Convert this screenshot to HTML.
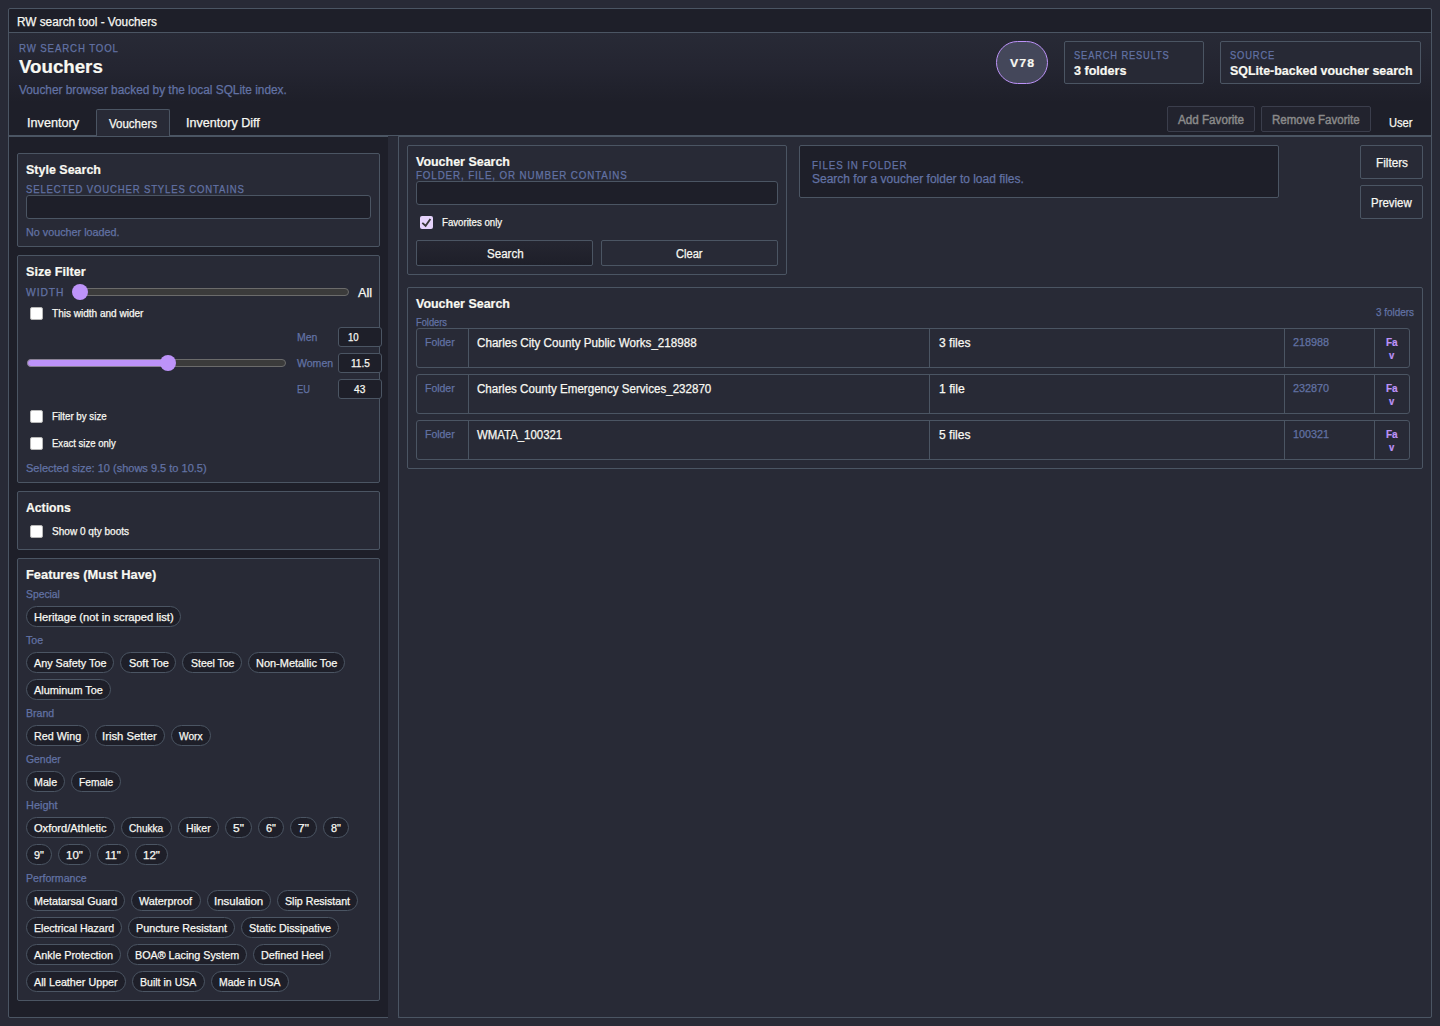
<!DOCTYPE html>
<html><head><meta charset="utf-8"><title>RW search tool - Vouchers</title>
<style>
html,body{margin:0;padding:0}
body{width:1440px;height:1026px;background:#282a36;position:relative;overflow:hidden;font-family:"Liberation Sans",sans-serif;}
.b{position:absolute;box-sizing:border-box}
.t{position:absolute;white-space:pre;line-height:1;transform-origin:0 0;}
.t i{display:inline-block;width:0;height:40px}
</style></head>
<body>
<div class="b" style="left:9px;top:9px;width:1422px;height:23px;background:#1e1f29;"></div>
<div class="b" style="left:9px;top:32px;width:1422px;height:1px;background:#4b5563;"></div>
<div class="b" style="left:9px;top:33px;width:1422px;height:102px;background:linear-gradient(to bottom,#282a36 0%,#242531 35%,#1e1f29 68%,#1e1f29 100%);"></div>
<div class="b" style="left:9px;top:137px;width:379px;height:880px;background:#1e1f29;"></div>
<div class="b" style="left:8px;top:8px;width:1424px;height:1010px;border:1px solid #4b5563;border-radius:2px;"></div>
<div class="b" style="left:9px;top:135px;width:1422px;height:2px;background:#4b5563;"></div>
<div class="b" style="left:388px;top:136px;width:10px;height:885px;background:#282a36;"></div>
<div class="b" style="left:398px;top:136px;width:1034px;height:882px;background:#282a36;border:1px solid #4b5563;border-radius:0 0 2px 2px;"></div>
<div class="b" style="left:96px;top:109px;width:74px;height:27px;background:#282a36;border:1px solid #4b5563;border-bottom:none;border-radius:2px 2px 0 0;"></div>
<div class="b" style="left:996px;top:41px;width:52px;height:43px;background:#44475a;border:1px solid #bd93f9;border-radius:22px;"></div>
<div class="b" style="left:1064px;top:41px;width:140px;height:43px;background:#272935;border:1px solid #4b5563;border-radius:2px;"></div>
<div class="b" style="left:1220px;top:41px;width:201px;height:43px;background:#272935;border:1px solid #4b5563;border-radius:2px;"></div>
<div class="b" style="left:1167px;top:106px;width:88px;height:26px;background:#22232e;border:1px solid #3b3e4c;border-radius:2px;"></div>
<div class="b" style="left:1261px;top:106px;width:110px;height:26px;background:#22232e;border:1px solid #3b3e4c;border-radius:2px;"></div>
<div class="b" style="left:17px;top:153px;width:363px;height:94px;background:#282a36;border:1px solid #4b5563;border-radius:2px;"></div>
<div class="b" style="left:26px;top:195px;width:345px;height:24px;background:#1e1f29;border:1px solid #4b5563;border-radius:3px;"></div>
<div class="b" style="left:17px;top:255px;width:363px;height:228px;background:#282a36;border:1px solid #4b5563;border-radius:2px;"></div>
<div class="b" style="left:73px;top:288px;width:276px;height:8px;background:#3b3b3b;border:1px solid #6b6b6b;border-radius:4px;"></div>
<div class="b" style="left:72px;top:284px;width:16px;height:16px;border-radius:8px;background:#bd93f9"></div>
<div class="b" style="left:30px;top:307px;width:13px;height:13px;border-radius:2px;background:#fff;border:1px solid #b8b8b8"></div>
<div class="b" style="left:338px;top:327px;width:44px;height:20px;background:#1e1f29;border:1px solid #4b5563;border-radius:3px;"></div>
<div class="b" style="left:338px;top:353px;width:44px;height:20px;background:#1e1f29;border:1px solid #4b5563;border-radius:3px;"></div>
<div class="b" style="left:338px;top:379px;width:44px;height:20px;background:#1e1f29;border:1px solid #4b5563;border-radius:3px;"></div>
<div class="b" style="left:27px;top:359px;width:259px;height:8px;background:#3b3b3b;border:1px solid #6b6b6b;border-radius:4px;"></div>
<div class="b" style="left:27px;top:359px;width:144px;height:8px;background:#bd93f9;border:1px solid #8a8296;border-radius:4px;"></div>
<div class="b" style="left:160px;top:355px;width:16px;height:16px;border-radius:8px;background:#bd93f9"></div>
<div class="b" style="left:30px;top:410px;width:13px;height:13px;border-radius:2px;background:#fff;border:1px solid #b8b8b8"></div>
<div class="b" style="left:30px;top:437px;width:13px;height:13px;border-radius:2px;background:#fff;border:1px solid #b8b8b8"></div>
<div class="b" style="left:17px;top:491px;width:363px;height:59px;background:#282a36;border:1px solid #4b5563;border-radius:2px;"></div>
<div class="b" style="left:30px;top:525px;width:13px;height:13px;border-radius:2px;background:#fff;border:1px solid #b8b8b8"></div>
<div class="b" style="left:17px;top:558px;width:363px;height:443px;background:#282a36;border:1px solid #4b5563;border-radius:2px;"></div>
<div class="b" style="left:26px;top:606px;width:155px;height:21px;background:#1e1f29;border:1px solid #4b5563;border-radius:11px;"></div>
<div class="b" style="left:26px;top:652px;width:88px;height:21px;background:#1e1f29;border:1px solid #4b5563;border-radius:11px;"></div>
<div class="b" style="left:120px;top:652px;width:56px;height:21px;background:#1e1f29;border:1px solid #4b5563;border-radius:11px;"></div>
<div class="b" style="left:182px;top:652px;width:60px;height:21px;background:#1e1f29;border:1px solid #4b5563;border-radius:11px;"></div>
<div class="b" style="left:248px;top:652px;width:97px;height:21px;background:#1e1f29;border:1px solid #4b5563;border-radius:11px;"></div>
<div class="b" style="left:26px;top:679px;width:85px;height:21px;background:#1e1f29;border:1px solid #4b5563;border-radius:11px;"></div>
<div class="b" style="left:26px;top:725px;width:63px;height:21px;background:#1e1f29;border:1px solid #4b5563;border-radius:11px;"></div>
<div class="b" style="left:95px;top:725px;width:70px;height:21px;background:#1e1f29;border:1px solid #4b5563;border-radius:11px;"></div>
<div class="b" style="left:171px;top:725px;width:40px;height:21px;background:#1e1f29;border:1px solid #4b5563;border-radius:11px;"></div>
<div class="b" style="left:26px;top:771px;width:39px;height:21px;background:#1e1f29;border:1px solid #4b5563;border-radius:11px;"></div>
<div class="b" style="left:71px;top:771px;width:50px;height:21px;background:#1e1f29;border:1px solid #4b5563;border-radius:11px;"></div>
<div class="b" style="left:26px;top:817px;width:89px;height:21px;background:#1e1f29;border:1px solid #4b5563;border-radius:11px;"></div>
<div class="b" style="left:121px;top:817px;width:51px;height:21px;background:#1e1f29;border:1px solid #4b5563;border-radius:11px;"></div>
<div class="b" style="left:178px;top:817px;width:41px;height:21px;background:#1e1f29;border:1px solid #4b5563;border-radius:11px;"></div>
<div class="b" style="left:225px;top:817px;width:27px;height:21px;background:#1e1f29;border:1px solid #4b5563;border-radius:11px;"></div>
<div class="b" style="left:258px;top:817px;width:26px;height:21px;background:#1e1f29;border:1px solid #4b5563;border-radius:11px;"></div>
<div class="b" style="left:290px;top:817px;width:27px;height:21px;background:#1e1f29;border:1px solid #4b5563;border-radius:11px;"></div>
<div class="b" style="left:323px;top:817px;width:26px;height:21px;background:#1e1f29;border:1px solid #4b5563;border-radius:11px;"></div>
<div class="b" style="left:26px;top:844px;width:26px;height:21px;background:#1e1f29;border:1px solid #4b5563;border-radius:11px;"></div>
<div class="b" style="left:58px;top:844px;width:33px;height:21px;background:#1e1f29;border:1px solid #4b5563;border-radius:11px;"></div>
<div class="b" style="left:97px;top:844px;width:32px;height:21px;background:#1e1f29;border:1px solid #4b5563;border-radius:11px;"></div>
<div class="b" style="left:135px;top:844px;width:33px;height:21px;background:#1e1f29;border:1px solid #4b5563;border-radius:11px;"></div>
<div class="b" style="left:26px;top:890px;width:99px;height:21px;background:#1e1f29;border:1px solid #4b5563;border-radius:11px;"></div>
<div class="b" style="left:131px;top:890px;width:70px;height:21px;background:#1e1f29;border:1px solid #4b5563;border-radius:11px;"></div>
<div class="b" style="left:207px;top:890px;width:64px;height:21px;background:#1e1f29;border:1px solid #4b5563;border-radius:11px;"></div>
<div class="b" style="left:277px;top:890px;width:81px;height:21px;background:#1e1f29;border:1px solid #4b5563;border-radius:11px;"></div>
<div class="b" style="left:26px;top:917px;width:96px;height:21px;background:#1e1f29;border:1px solid #4b5563;border-radius:11px;"></div>
<div class="b" style="left:128px;top:917px;width:107px;height:21px;background:#1e1f29;border:1px solid #4b5563;border-radius:11px;"></div>
<div class="b" style="left:241px;top:917px;width:98px;height:21px;background:#1e1f29;border:1px solid #4b5563;border-radius:11px;"></div>
<div class="b" style="left:26px;top:944px;width:95px;height:21px;background:#1e1f29;border:1px solid #4b5563;border-radius:11px;"></div>
<div class="b" style="left:127px;top:944px;width:120px;height:21px;background:#1e1f29;border:1px solid #4b5563;border-radius:11px;"></div>
<div class="b" style="left:253px;top:944px;width:78px;height:21px;background:#1e1f29;border:1px solid #4b5563;border-radius:11px;"></div>
<div class="b" style="left:26px;top:971px;width:100px;height:21px;background:#1e1f29;border:1px solid #4b5563;border-radius:11px;"></div>
<div class="b" style="left:132px;top:971px;width:73px;height:21px;background:#1e1f29;border:1px solid #4b5563;border-radius:11px;"></div>
<div class="b" style="left:211px;top:971px;width:78px;height:21px;background:#1e1f29;border:1px solid #4b5563;border-radius:11px;"></div>
<div class="b" style="left:407px;top:145px;width:380px;height:130px;background:#282a36;border:1px solid #4b5563;border-radius:2px;"></div>
<div class="b" style="left:416px;top:181px;width:362px;height:24px;background:#1e1f29;border:1px solid #4b5563;border-radius:3px;"></div>
<div class="b" style="left:420px;top:216px;width:13px;height:13px;border-radius:2px;background:#e6d4fc;"></div><svg class="b" style="left:420px;top:216px" width="13" height="13" viewBox="0 0 13 13"><path d="M2.3 6.9 L5.6 9.8 L10.4 2.9" fill="none" stroke="#383838" stroke-width="1.8"/></svg>
<div class="b" style="left:416px;top:240px;width:177px;height:26px;border:1px solid #4b5563;border-radius:2px;background:linear-gradient(to bottom,#252631,#1e1f29);"></div>
<div class="b" style="left:601px;top:240px;width:177px;height:26px;background:#282a36;border:1px solid #4b5563;border-radius:2px;"></div>
<div class="b" style="left:799px;top:145px;width:480px;height:53px;background:#1e1f29;border:1px solid #4b5563;border-radius:2px;"></div>
<div class="b" style="left:1360px;top:145px;width:63px;height:34px;background:#282a36;border:1px solid #4b5563;border-radius:2px;"></div>
<div class="b" style="left:1360px;top:185px;width:63px;height:34px;background:#282a36;border:1px solid #4b5563;border-radius:2px;"></div>
<div class="b" style="left:407px;top:287px;width:1016px;height:182px;background:#282a36;border:1px solid #4b5563;border-radius:2px;"></div>
<div class="b" style="left:416px;top:328px;width:994px;height:40px;background:#282a36;border:1px solid #4b5563;border-radius:3px;"></div>
<div class="b" style="left:468px;top:329px;width:1px;height:38px;background:#4b5563;"></div>
<div class="b" style="left:929px;top:329px;width:1px;height:38px;background:#4b5563;"></div>
<div class="b" style="left:1284px;top:329px;width:1px;height:38px;background:#4b5563;"></div>
<div class="b" style="left:1374px;top:329px;width:1px;height:38px;background:#4b5563;"></div>
<div class="b" style="left:416px;top:374px;width:994px;height:40px;background:#282a36;border:1px solid #4b5563;border-radius:3px;"></div>
<div class="b" style="left:468px;top:375px;width:1px;height:38px;background:#4b5563;"></div>
<div class="b" style="left:929px;top:375px;width:1px;height:38px;background:#4b5563;"></div>
<div class="b" style="left:1284px;top:375px;width:1px;height:38px;background:#4b5563;"></div>
<div class="b" style="left:1374px;top:375px;width:1px;height:38px;background:#4b5563;"></div>
<div class="b" style="left:416px;top:420px;width:994px;height:40px;background:#282a36;border:1px solid #4b5563;border-radius:3px;"></div>
<div class="b" style="left:468px;top:421px;width:1px;height:38px;background:#4b5563;"></div>
<div class="b" style="left:929px;top:421px;width:1px;height:38px;background:#4b5563;"></div>
<div class="b" style="left:1284px;top:421px;width:1px;height:38px;background:#4b5563;"></div>
<div class="b" style="left:1374px;top:421px;width:1px;height:38px;background:#4b5563;"></div>
<div class="t" style="left:17.00px;top:-14.0px;font-size:12px;color:#f8f8f2;transform:scaleX(0.9824);-webkit-text-stroke:0.25px #f8f8f2;"><i></i>RW search tool - Vouchers</div>
<div class="t" style="left:19.00px;top:12.0px;font-size:11px;color:#6272a4;transform:scaleX(0.8783);-webkit-text-stroke:0.25px #6272a4;letter-spacing:1px;"><i></i>RW SEARCH TOOL</div>
<div class="t" style="left:19.00px;top:33.0px;font-size:18.5px;color:#f8f8f2;transform:scaleX(1.0103);-webkit-text-stroke:0.2px #f8f8f2;font-weight:700;"><i></i>Vouchers</div>
<div class="t" style="left:19.00px;top:54.0px;font-size:12px;color:#6272a4;transform:scaleX(0.9865);-webkit-text-stroke:0.25px #6272a4;"><i></i>Voucher browser backed by the local SQLite index.</div>
<div class="t" style="left:26.95px;top:87.0px;font-size:12px;color:#f8f8f2;transform:scaleX(1.0546);-webkit-text-stroke:0.25px #f8f8f2;"><i></i>Inventory</div>
<div class="t" style="left:108.60px;top:88.0px;font-size:12px;color:#f8f8f2;transform:scaleX(0.9594);-webkit-text-stroke:0.25px #f8f8f2;"><i></i>Vouchers</div>
<div class="t" style="left:185.95px;top:87.0px;font-size:12px;color:#f8f8f2;transform:scaleX(1.0479);-webkit-text-stroke:0.25px #f8f8f2;"><i></i>Inventory Diff</div>
<div class="t" style="left:1010.00px;top:27.0px;font-size:11px;color:#f8f8f2;transform:scaleX(1.1186);-webkit-text-stroke:0.2px #f8f8f2;font-weight:700;letter-spacing:1px;"><i></i>V78</div>
<div class="t" style="left:1073.50px;top:19.0px;font-size:11px;color:#6272a4;transform:scaleX(0.8477);-webkit-text-stroke:0.25px #6272a4;letter-spacing:1px;"><i></i>SEARCH RESULTS</div>
<div class="t" style="left:1073.50px;top:35.0px;font-size:12.5px;color:#f8f8f2;transform:scaleX(1.0068);-webkit-text-stroke:0.2px #f8f8f2;font-weight:700;"><i></i>3 folders</div>
<div class="t" style="left:1229.50px;top:19.0px;font-size:11px;color:#6272a4;transform:scaleX(0.8507);-webkit-text-stroke:0.25px #6272a4;letter-spacing:1px;"><i></i>SOURCE</div>
<div class="t" style="left:1229.50px;top:35.0px;font-size:12.5px;color:#f8f8f2;transform:scaleX(0.9952);-webkit-text-stroke:0.2px #f8f8f2;font-weight:700;"><i></i>SQLite-backed voucher search</div>
<div class="t" style="left:1178.20px;top:84.0px;font-size:12px;color:#8a8a8a;transform:scaleX(0.9713);-webkit-text-stroke:0.45px #8a8a8a;"><i></i>Add Favorite</div>
<div class="t" style="left:1272.00px;top:84.0px;font-size:12px;color:#8a8a8a;transform:scaleX(0.9597);-webkit-text-stroke:0.45px #8a8a8a;"><i></i>Remove Favorite</div>
<div class="t" style="left:1388.50px;top:87.0px;font-size:12px;color:#f8f8f2;transform:scaleX(0.9274);-webkit-text-stroke:0.25px #f8f8f2;"><i></i>User</div>
<div class="t" style="left:26.00px;top:134.0px;font-size:13px;color:#f8f8f2;transform:scaleX(0.9603);-webkit-text-stroke:0.2px #f8f8f2;font-weight:700;"><i></i>Style Search</div>
<div class="t" style="left:26.00px;top:153.0px;font-size:11px;color:#6272a4;transform:scaleX(0.8661);-webkit-text-stroke:0.25px #6272a4;letter-spacing:1px;"><i></i>SELECTED VOUCHER STYLES CONTAINS</div>
<div class="t" style="left:26.00px;top:196.0px;font-size:11px;color:#6272a4;transform:scaleX(0.9807);-webkit-text-stroke:0.25px #6272a4;"><i></i>No voucher loaded.</div>
<div class="t" style="left:26.00px;top:236.0px;font-size:13px;color:#f8f8f2;transform:scaleX(0.9699);-webkit-text-stroke:0.2px #f8f8f2;font-weight:700;"><i></i>Size Filter</div>
<div class="t" style="left:26.00px;top:256.0px;font-size:11px;color:#6272a4;transform:scaleX(0.9351);-webkit-text-stroke:0.25px #6272a4;letter-spacing:1px;"><i></i>WIDTH</div>
<div class="t" style="left:358.00px;top:257.0px;font-size:12px;color:#f8f8f2;transform:scaleX(1.0655);-webkit-text-stroke:0.25px #f8f8f2;"><i></i>All</div>
<div class="t" style="left:52.00px;top:277.0px;font-size:10.2px;color:#f8f8f2;transform:scaleX(0.9843);-webkit-text-stroke:0.25px #f8f8f2;"><i></i>This width and wider</div>
<div class="t" style="left:297.00px;top:301.0px;font-size:11px;color:#6272a4;transform:scaleX(0.9516);-webkit-text-stroke:0.25px #6272a4;"><i></i>Men</div>
<div class="t" style="left:297.00px;top:327.0px;font-size:11px;color:#6272a4;transform:scaleX(0.9579);-webkit-text-stroke:0.25px #6272a4;"><i></i>Women</div>
<div class="t" style="left:297.00px;top:353.0px;font-size:11px;color:#6272a4;transform:scaleX(0.8476);-webkit-text-stroke:0.25px #6272a4;"><i></i>EU</div>
<div class="t" style="left:347.50px;top:301.0px;font-size:10.2px;color:#f8f8f2;transform:scaleX(0.9429);-webkit-text-stroke:0.25px #f8f8f2;"><i></i>10</div>
<div class="t" style="left:350.60px;top:327.0px;font-size:10.2px;color:#f8f8f2;transform:scaleX(0.9869);-webkit-text-stroke:0.25px #f8f8f2;"><i></i>11.5</div>
<div class="t" style="left:354.00px;top:353.0px;font-size:10.2px;color:#f8f8f2;transform:scaleX(0.9944);-webkit-text-stroke:0.25px #f8f8f2;"><i></i>43</div>
<div class="t" style="left:52.00px;top:380.0px;font-size:10.2px;color:#f8f8f2;transform:scaleX(0.9564);-webkit-text-stroke:0.25px #f8f8f2;"><i></i>Filter by size</div>
<div class="t" style="left:52.00px;top:407.0px;font-size:10.2px;color:#f8f8f2;transform:scaleX(0.9368);-webkit-text-stroke:0.25px #f8f8f2;"><i></i>Exact size only</div>
<div class="t" style="left:26.00px;top:432.0px;font-size:11px;color:#6272a4;transform:scaleX(1.0016);-webkit-text-stroke:0.25px #6272a4;"><i></i>Selected size: 10 (shows 9.5 to 10.5)</div>
<div class="t" style="left:26.00px;top:472.0px;font-size:13px;color:#f8f8f2;transform:scaleX(0.9380);-webkit-text-stroke:0.2px #f8f8f2;font-weight:700;"><i></i>Actions</div>
<div class="t" style="left:52.00px;top:495.0px;font-size:10.2px;color:#f8f8f2;transform:scaleX(0.9864);-webkit-text-stroke:0.25px #f8f8f2;"><i></i>Show 0 qty boots</div>
<div class="t" style="left:26.00px;top:539.0px;font-size:13px;color:#f8f8f2;transform:scaleX(0.9912);-webkit-text-stroke:0.2px #f8f8f2;font-weight:700;"><i></i>Features (Must Have)</div>
<div class="t" style="left:26.00px;top:558.0px;font-size:11px;color:#6272a4;transform:scaleX(0.9401);-webkit-text-stroke:0.25px #6272a4;"><i></i>Special</div>
<div class="t" style="left:26.00px;top:604.0px;font-size:11px;color:#6272a4;transform:scaleX(0.9649);-webkit-text-stroke:0.25px #6272a4;"><i></i>Toe</div>
<div class="t" style="left:26.00px;top:677.0px;font-size:11px;color:#6272a4;transform:scaleX(0.9577);-webkit-text-stroke:0.25px #6272a4;"><i></i>Brand</div>
<div class="t" style="left:26.00px;top:723.0px;font-size:11px;color:#6272a4;transform:scaleX(0.9453);-webkit-text-stroke:0.25px #6272a4;"><i></i>Gender</div>
<div class="t" style="left:26.00px;top:769.0px;font-size:11px;color:#6272a4;transform:scaleX(0.9924);-webkit-text-stroke:0.25px #6272a4;"><i></i>Height</div>
<div class="t" style="left:26.00px;top:842.0px;font-size:11px;color:#6272a4;transform:scaleX(0.9626);-webkit-text-stroke:0.25px #6272a4;"><i></i>Performance</div>
<div class="t" style="left:34.00px;top:581.0px;font-size:11px;color:#f8f8f2;transform:scaleX(1.0154);-webkit-text-stroke:0.25px #f8f8f2;"><i></i>Heritage (not in scraped list)</div>
<div class="t" style="left:34.00px;top:627.0px;font-size:11px;color:#f8f8f2;transform:scaleX(0.9815);-webkit-text-stroke:0.25px #f8f8f2;"><i></i>Any Safety Toe</div>
<div class="t" style="left:128.50px;top:627.0px;font-size:11px;color:#f8f8f2;transform:scaleX(0.9940);-webkit-text-stroke:0.25px #f8f8f2;"><i></i>Soft Toe</div>
<div class="t" style="left:190.50px;top:627.0px;font-size:11px;color:#f8f8f2;transform:scaleX(0.9509);-webkit-text-stroke:0.25px #f8f8f2;"><i></i>Steel Toe</div>
<div class="t" style="left:256.00px;top:627.0px;font-size:11px;color:#f8f8f2;transform:scaleX(0.9963);-webkit-text-stroke:0.25px #f8f8f2;"><i></i>Non-Metallic Toe</div>
<div class="t" style="left:34.00px;top:654.0px;font-size:11px;color:#f8f8f2;transform:scaleX(0.9917);-webkit-text-stroke:0.25px #f8f8f2;"><i></i>Aluminum Toe</div>
<div class="t" style="left:34.00px;top:700.0px;font-size:11px;color:#f8f8f2;transform:scaleX(0.9755);-webkit-text-stroke:0.25px #f8f8f2;"><i></i>Red Wing</div>
<div class="t" style="left:101.97px;top:700.0px;font-size:11px;color:#f8f8f2;transform:scaleX(1.0282);-webkit-text-stroke:0.25px #f8f8f2;"><i></i>Irish Setter</div>
<div class="t" style="left:179.00px;top:700.0px;font-size:11px;color:#f8f8f2;transform:scaleX(0.9243);-webkit-text-stroke:0.25px #f8f8f2;"><i></i>Worx</div>
<div class="t" style="left:34.00px;top:746.0px;font-size:11px;color:#f8f8f2;transform:scaleX(0.9695);-webkit-text-stroke:0.25px #f8f8f2;"><i></i>Male</div>
<div class="t" style="left:79.00px;top:746.0px;font-size:11px;color:#f8f8f2;transform:scaleX(0.9299);-webkit-text-stroke:0.25px #f8f8f2;"><i></i>Female</div>
<div class="t" style="left:34.00px;top:792.0px;font-size:11px;color:#f8f8f2;transform:scaleX(1.0050);-webkit-text-stroke:0.25px #f8f8f2;"><i></i>Oxford/Athletic</div>
<div class="t" style="left:129.00px;top:792.0px;font-size:11px;color:#f8f8f2;transform:scaleX(0.9167);-webkit-text-stroke:0.25px #f8f8f2;"><i></i>Chukka</div>
<div class="t" style="left:186.00px;top:792.0px;font-size:11px;color:#f8f8f2;transform:scaleX(0.9613);-webkit-text-stroke:0.25px #f8f8f2;"><i></i>Hiker</div>
<div class="t" style="left:233.00px;top:792.0px;font-size:11px;color:#f8f8f2;transform:scaleX(1.0872);-webkit-text-stroke:0.25px #f8f8f2;"><i></i>5"</div>
<div class="t" style="left:266.00px;top:792.0px;font-size:11px;color:#f8f8f2;transform:scaleX(0.9884);-webkit-text-stroke:0.25px #f8f8f2;"><i></i>6"</div>
<div class="t" style="left:298.00px;top:792.0px;font-size:11px;color:#f8f8f2;transform:scaleX(1.0872);-webkit-text-stroke:0.25px #f8f8f2;"><i></i>7"</div>
<div class="t" style="left:331.00px;top:792.0px;font-size:11px;color:#f8f8f2;transform:scaleX(0.9884);-webkit-text-stroke:0.25px #f8f8f2;"><i></i>8"</div>
<div class="t" style="left:34.00px;top:819.0px;font-size:11px;color:#f8f8f2;transform:scaleX(0.9884);-webkit-text-stroke:0.25px #f8f8f2;"><i></i>9"</div>
<div class="t" style="left:66.00px;top:819.0px;font-size:11px;color:#f8f8f2;transform:scaleX(1.0471);-webkit-text-stroke:0.25px #f8f8f2;"><i></i>10"</div>
<div class="t" style="left:105.00px;top:819.0px;font-size:11px;color:#f8f8f2;transform:scaleX(1.0377);-webkit-text-stroke:0.25px #f8f8f2;"><i></i>11"</div>
<div class="t" style="left:143.00px;top:819.0px;font-size:11px;color:#f8f8f2;transform:scaleX(1.0471);-webkit-text-stroke:0.25px #f8f8f2;"><i></i>12"</div>
<div class="t" style="left:34.00px;top:865.0px;font-size:11px;color:#f8f8f2;transform:scaleX(0.9780);-webkit-text-stroke:0.25px #f8f8f2;"><i></i>Metatarsal Guard</div>
<div class="t" style="left:139.00px;top:865.0px;font-size:11px;color:#f8f8f2;transform:scaleX(0.9828);-webkit-text-stroke:0.25px #f8f8f2;"><i></i>Waterproof</div>
<div class="t" style="left:213.96px;top:865.0px;font-size:11px;color:#f8f8f2;transform:scaleX(1.0441);-webkit-text-stroke:0.25px #f8f8f2;"><i></i>Insulation</div>
<div class="t" style="left:285.00px;top:865.0px;font-size:11px;color:#f8f8f2;transform:scaleX(0.9673);-webkit-text-stroke:0.25px #f8f8f2;"><i></i>Slip Resistant</div>
<div class="t" style="left:34.00px;top:892.0px;font-size:11px;color:#f8f8f2;transform:scaleX(0.9636);-webkit-text-stroke:0.25px #f8f8f2;"><i></i>Electrical Hazard</div>
<div class="t" style="left:136.00px;top:892.0px;font-size:11px;color:#f8f8f2;transform:scaleX(0.9798);-webkit-text-stroke:0.25px #f8f8f2;"><i></i>Puncture Resistant</div>
<div class="t" style="left:249.00px;top:892.0px;font-size:11px;color:#f8f8f2;transform:scaleX(0.9805);-webkit-text-stroke:0.25px #f8f8f2;"><i></i>Static Dissipative</div>
<div class="t" style="left:34.00px;top:919.0px;font-size:11px;color:#f8f8f2;transform:scaleX(0.9877);-webkit-text-stroke:0.25px #f8f8f2;"><i></i>Ankle Protection</div>
<div class="t" style="left:135.00px;top:919.0px;font-size:11px;color:#f8f8f2;transform:scaleX(0.9777);-webkit-text-stroke:0.25px #f8f8f2;"><i></i>BOA® Lacing System</div>
<div class="t" style="left:261.00px;top:919.0px;font-size:11px;color:#f8f8f2;transform:scaleX(0.9818);-webkit-text-stroke:0.25px #f8f8f2;"><i></i>Defined Heel</div>
<div class="t" style="left:34.00px;top:946.0px;font-size:11px;color:#f8f8f2;transform:scaleX(0.9774);-webkit-text-stroke:0.25px #f8f8f2;"><i></i>All Leather Upper</div>
<div class="t" style="left:140.00px;top:946.0px;font-size:11px;color:#f8f8f2;transform:scaleX(0.9604);-webkit-text-stroke:0.25px #f8f8f2;"><i></i>Built in USA</div>
<div class="t" style="left:219.00px;top:946.0px;font-size:11px;color:#f8f8f2;transform:scaleX(0.9470);-webkit-text-stroke:0.25px #f8f8f2;"><i></i>Made in USA</div>
<div class="t" style="left:416.00px;top:126.0px;font-size:13px;color:#f8f8f2;transform:scaleX(0.9584);-webkit-text-stroke:0.2px #f8f8f2;font-weight:700;"><i></i>Voucher Search</div>
<div class="t" style="left:416.00px;top:139.0px;font-size:11px;color:#6272a4;transform:scaleX(0.8880);-webkit-text-stroke:0.25px #6272a4;letter-spacing:1px;"><i></i>FOLDER, FILE, OR NUMBER CONTAINS</div>
<div class="t" style="left:442.00px;top:186.0px;font-size:10.2px;color:#f8f8f2;transform:scaleX(0.9484);-webkit-text-stroke:0.25px #f8f8f2;"><i></i>Favorites only</div>
<div class="t" style="left:486.50px;top:218.0px;font-size:12px;color:#f8f8f2;transform:scaleX(0.9639);-webkit-text-stroke:0.25px #f8f8f2;"><i></i>Search</div>
<div class="t" style="left:676.00px;top:218.0px;font-size:12px;color:#f8f8f2;transform:scaleX(0.9240);-webkit-text-stroke:0.25px #f8f8f2;"><i></i>Clear</div>
<div class="t" style="left:812.00px;top:129.0px;font-size:11px;color:#6272a4;transform:scaleX(0.8886);-webkit-text-stroke:0.25px #6272a4;letter-spacing:1px;"><i></i>FILES IN FOLDER</div>
<div class="t" style="left:812.00px;top:143.0px;font-size:12px;color:#6272a4;transform:scaleX(0.9987);-webkit-text-stroke:0.25px #6272a4;"><i></i>Search for a voucher folder to load files.</div>
<div class="t" style="left:1375.50px;top:127.0px;font-size:12px;color:#f8f8f2;transform:scaleX(0.9796);-webkit-text-stroke:0.25px #f8f8f2;"><i></i>Filters</div>
<div class="t" style="left:1371.00px;top:167.0px;font-size:12px;color:#f8f8f2;transform:scaleX(0.9532);-webkit-text-stroke:0.25px #f8f8f2;"><i></i>Preview</div>
<div class="t" style="left:416.00px;top:268.0px;font-size:13px;color:#f8f8f2;transform:scaleX(0.9584);-webkit-text-stroke:0.2px #f8f8f2;font-weight:700;"><i></i>Voucher Search</div>
<div class="t" style="left:416.00px;top:286.0px;font-size:10px;color:#6272a4;transform:scaleX(0.9297);-webkit-text-stroke:0.25px #6272a4;"><i></i>Folders</div>
<div class="t" style="left:1376.00px;top:276.0px;font-size:10px;color:#6272a4;transform:scaleX(0.9908);-webkit-text-stroke:0.25px #6272a4;"><i></i>3 folders</div>
<div class="t" style="left:425.00px;top:306.0px;font-size:11px;color:#6272a4;transform:scaleX(0.9519);-webkit-text-stroke:0.25px #6272a4;"><i></i>Folder</div>
<div class="t" style="left:477.00px;top:307.0px;font-size:12px;color:#f8f8f2;transform:scaleX(0.9697);-webkit-text-stroke:0.25px #f8f8f2;"><i></i>Charles City County Public Works_218988</div>
<div class="t" style="left:938.50px;top:307.0px;font-size:12px;color:#f8f8f2;transform:scaleX(1.0049);-webkit-text-stroke:0.25px #f8f8f2;"><i></i>3 files</div>
<div class="t" style="left:1293.00px;top:306.0px;font-size:11px;color:#6272a4;transform:scaleX(0.9839);-webkit-text-stroke:0.25px #6272a4;"><i></i>218988</div>
<div class="t" style="left:1385.50px;top:306.0px;font-size:11px;color:#bd93f9;transform:scaleX(0.9111);-webkit-text-stroke:0.2px #bd93f9;font-weight:700;"><i></i>Fa</div>
<div class="t" style="left:1389.00px;top:319.0px;font-size:11px;color:#bd93f9;transform:scaleX(0.8571);-webkit-text-stroke:0.2px #bd93f9;font-weight:700;"><i></i>v</div>
<div class="t" style="left:425.00px;top:352.0px;font-size:11px;color:#6272a4;transform:scaleX(0.9519);-webkit-text-stroke:0.25px #6272a4;"><i></i>Folder</div>
<div class="t" style="left:477.00px;top:353.0px;font-size:12px;color:#f8f8f2;transform:scaleX(0.9650);-webkit-text-stroke:0.25px #f8f8f2;"><i></i>Charles County Emergency Services_232870</div>
<div class="t" style="left:938.50px;top:353.0px;font-size:12px;color:#f8f8f2;transform:scaleX(1.0127);-webkit-text-stroke:0.25px #f8f8f2;"><i></i>1 file</div>
<div class="t" style="left:1293.00px;top:352.0px;font-size:11px;color:#6272a4;transform:scaleX(0.9839);-webkit-text-stroke:0.25px #6272a4;"><i></i>232870</div>
<div class="t" style="left:1385.50px;top:352.0px;font-size:11px;color:#bd93f9;transform:scaleX(0.9111);-webkit-text-stroke:0.2px #bd93f9;font-weight:700;"><i></i>Fa</div>
<div class="t" style="left:1389.00px;top:365.0px;font-size:11px;color:#bd93f9;transform:scaleX(0.8571);-webkit-text-stroke:0.2px #bd93f9;font-weight:700;"><i></i>v</div>
<div class="t" style="left:425.00px;top:398.0px;font-size:11px;color:#6272a4;transform:scaleX(0.9519);-webkit-text-stroke:0.25px #6272a4;"><i></i>Folder</div>
<div class="t" style="left:477.00px;top:399.0px;font-size:12px;color:#f8f8f2;transform:scaleX(0.9508);-webkit-text-stroke:0.25px #f8f8f2;"><i></i>WMATA_100321</div>
<div class="t" style="left:938.50px;top:399.0px;font-size:12px;color:#f8f8f2;transform:scaleX(1.0049);-webkit-text-stroke:0.25px #f8f8f2;"><i></i>5 files</div>
<div class="t" style="left:1293.00px;top:398.0px;font-size:11px;color:#6272a4;transform:scaleX(0.9839);-webkit-text-stroke:0.25px #6272a4;"><i></i>100321</div>
<div class="t" style="left:1385.50px;top:398.0px;font-size:11px;color:#bd93f9;transform:scaleX(0.9111);-webkit-text-stroke:0.2px #bd93f9;font-weight:700;"><i></i>Fa</div>
<div class="t" style="left:1389.00px;top:411.0px;font-size:11px;color:#bd93f9;transform:scaleX(0.8571);-webkit-text-stroke:0.2px #bd93f9;font-weight:700;"><i></i>v</div>
</body></html>
